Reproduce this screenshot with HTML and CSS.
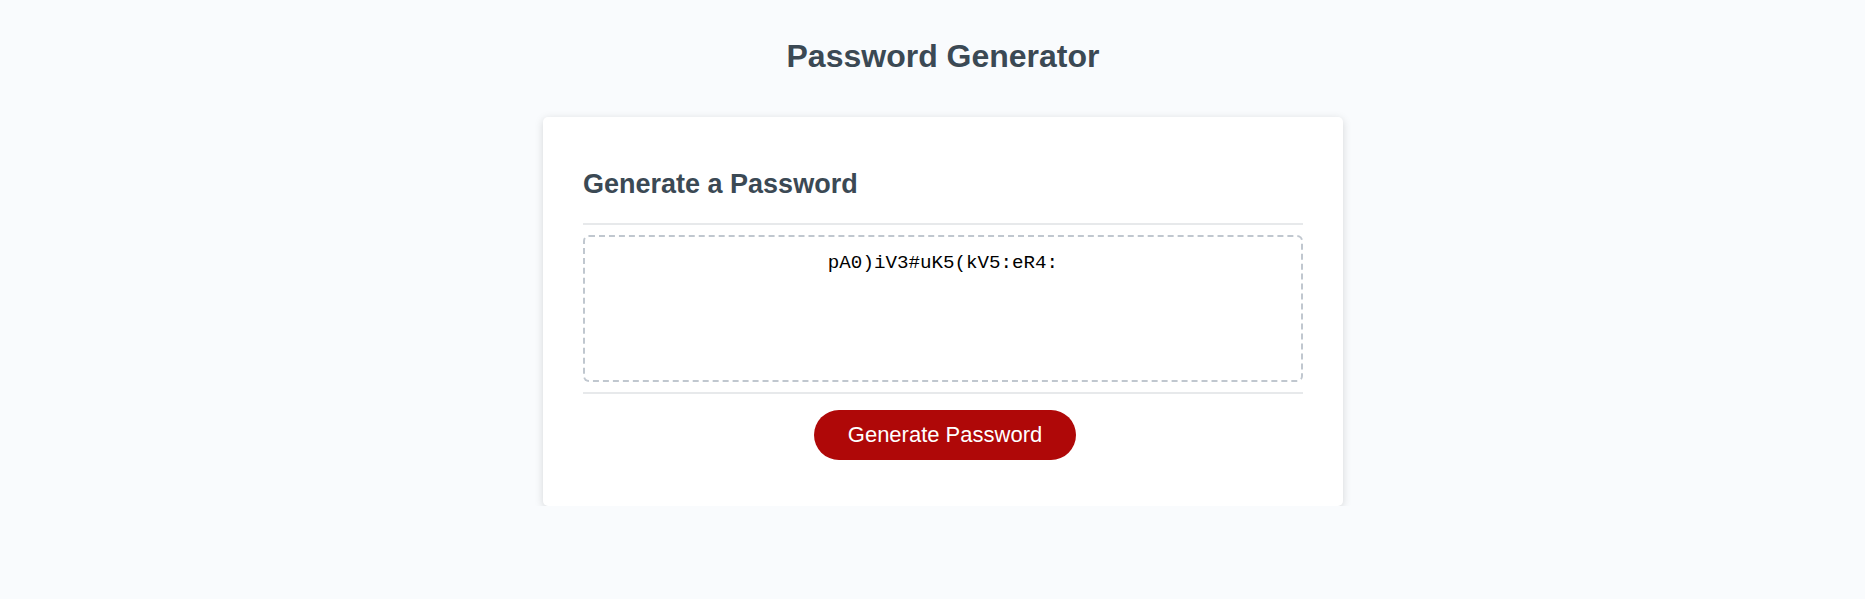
FILE: index.html
```html
<!DOCTYPE html>
<html lang="en">
<head>
<meta charset="UTF-8">
<title>Password Generator</title>
<link rel="stylesheet" href="styles.css">
</head>
<body>
<div class="wrapper">
  <header>
    <h1>Password Generator</h1>
  </header>
  <div class="card">
    <div class="card-header">
      <h2>Generate a Password</h2>
    </div>
    <div class="card-body">
      <textarea readonly id="password" placeholder="Your Secure Password" aria-label="Generated Password">pA0)iV3#uK5(kV5:eR4:</textarea>
    </div>
    <div class="card-footer">
      <button id="generate" class="btn">Generate Password</button>
    </div>
  </div>
</div>
</body>
</html>
```

FILE: styles.css
```css
*, *::before, *::after {
  box-sizing: border-box;
}

body {
  margin: 0;
  padding: 0;
  font-family: "Liberation Sans", Arial, sans-serif;
  background-color: #f9fbfd;
}

.wrapper {
  padding: 30px 20px 0 41px;
}

header {
  text-align: center;
  padding: 0 20px 20px;
  color: hsl(206, 17%, 28%);
}

header h1 {
  font-size: 32px;
  margin: 8px 0 22px;
}

.card {
  background-color: #fff;
  border-radius: 5px;
  box-shadow: rgba(0, 0, 0, 0.15) 0px 2px 8px 0px;
  color: hsl(206, 17%, 28%);
  font-size: 18px;
  margin: 0 auto;
  max-width: 800px;
  padding: 30px 40px;
}

.card-header h2 {
  font-size: 27px;
  margin: 22.4px 0;
}

.card-header::after {
  content: " ";
  display: block;
  width: 100%;
  background: #e7e9eb;
  height: 2px;
}

.card-body {
  min-height: 100px;
}

.card-footer {
  text-align: center;
}

.card-footer::before {
  content: " ";
  display: block;
  width: 100%;
  background: #e7e9eb;
  height: 2px;
}

.btn {
  border: none;
  background-color: hsl(360, 91%, 36%);
  border-radius: 25px;
  color: #fff;
  display: inline-block;
  font-family: "Liberation Sans", Arial, sans-serif;
  font-size: 22px;
  line-height: 22px;
  margin: 16px 16px 16px 20px;
  padding: 14px 34px;
  text-align: center;
  cursor: pointer;
}

#password {
  appearance: none;
  display: block;
  width: 100%;
  height: 147px;
  padding: 15px 15px 85px;
  font-family: "Liberation Mono", "Courier New", monospace;
  font-size: 19.2px;
  color: #000;
  text-align: center;
  margin: 10px 0;
  border: 2px dashed #c0c7cf;
  border-radius: 6px;
  resize: none;
  overflow: hidden;
  background: #fff;
}
```
